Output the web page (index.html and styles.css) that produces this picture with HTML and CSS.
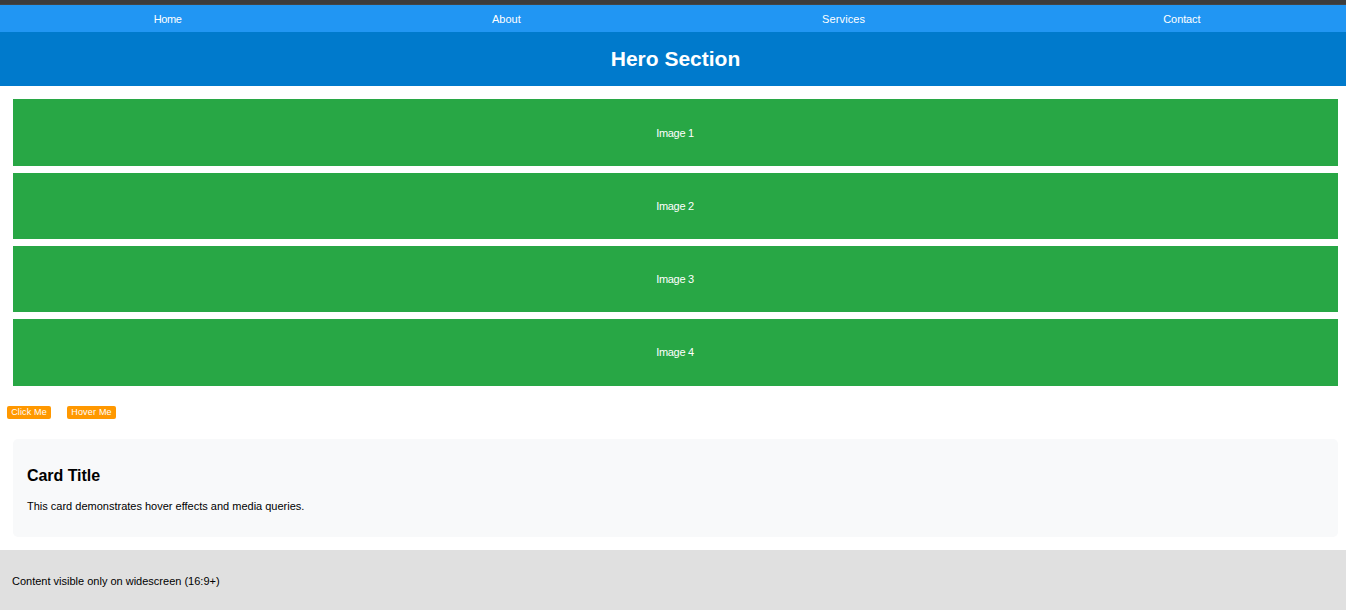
FILE: index.html
```
<!DOCTYPE html>
<html lang="en">
<head>
<meta charset="utf-8">
<title>Media Queries Demo</title>
<link rel="stylesheet" href="styles.css">
</head>
<body>
<div class="topbar"></div>
<nav class="nav"><a class="tight">Home</a><a>About</a><a class="loose">Services</a><a class="last">Contact</a></nav>
<header class="hero"><h1>Hero Section</h1></header>
<main>
<section class="gallery">
<div class="tile">Image 1</div>
<div class="tile">Image 2</div>
<div class="tile">Image 3</div>
<div class="tile">Image 4</div>
</section>
<div class="actions"><button class="btn">Click Me</button><button class="btn btn-hover">Hover Me</button></div>
<article class="card"><h2>Card Title</h2><p>This card demonstrates hover effects and media queries.</p></article>
</main>
<footer class="wide">Content visible only on widescreen (16:9+)</footer>
</body>
</html>
```
FILE: styles.css
```
* { box-sizing: border-box; }
body { margin: 0; height: 610px; overflow: hidden; background: #fff; color: #000; font-family: "Liberation Sans", Arial, sans-serif; font-size: 11px; line-height: 13px; }
.topbar { height: 5px; background: #3c3c3c; border-bottom: 1px solid #454545; }
.nav { display: grid; grid-template-columns: repeat(4, 1fr); gap: 7px; height: 27px; align-items: center; text-align: center; background: #2196f3; color: #fff; padding: 1px 0 0 4px; }
.nav .tight { padding-right: 3px; letter-spacing: -0.45px; }
.nav .loose { letter-spacing: 0.12px; }
.nav .last { padding-left: 2px; letter-spacing: -0.1px; }
.hero { height: 54px; display: flex; align-items: center; justify-content: center; padding-left: 5px; background: #007acc; color: #fff; }
.hero h1 { margin: 0; font-size: 21px; line-height: 24px; }
.gallery { display: grid; grid-template-rows: repeat(4, 66.5px); gap: 6.8px; padding: 13.3px 8px 0.3px 13px; }
.tile { display: flex; align-items: center; justify-content: center; padding: 1px 1px 0 0; background: #28a745; color: #fff; letter-spacing: -0.3px; }
.actions { display: flex; gap: 16px; padding: 20px 7px; }
.btn { width: 44px; height: 13px; padding: 0; border: 0; border-radius: 2px; background: #ff9800; color: #fff; font: 9px/13px "Liberation Sans", Arial, sans-serif; letter-spacing: 0.15px; white-space: nowrap; }
.btn-hover { width: 49px; letter-spacing: 0.2px; }
.card { margin: 0 8px 13px 13px; height: 98px; padding: 27px 14px; border-radius: 5px; background: #f8f9fa; }
.card h2 { margin: 0 0 15px; font-size: 16px; line-height: 19px; letter-spacing: -0.05px; }
.card p { margin: 0; }
.wide { height: 60px; padding: 25px 12px; background: #e0e0e0; }
```
